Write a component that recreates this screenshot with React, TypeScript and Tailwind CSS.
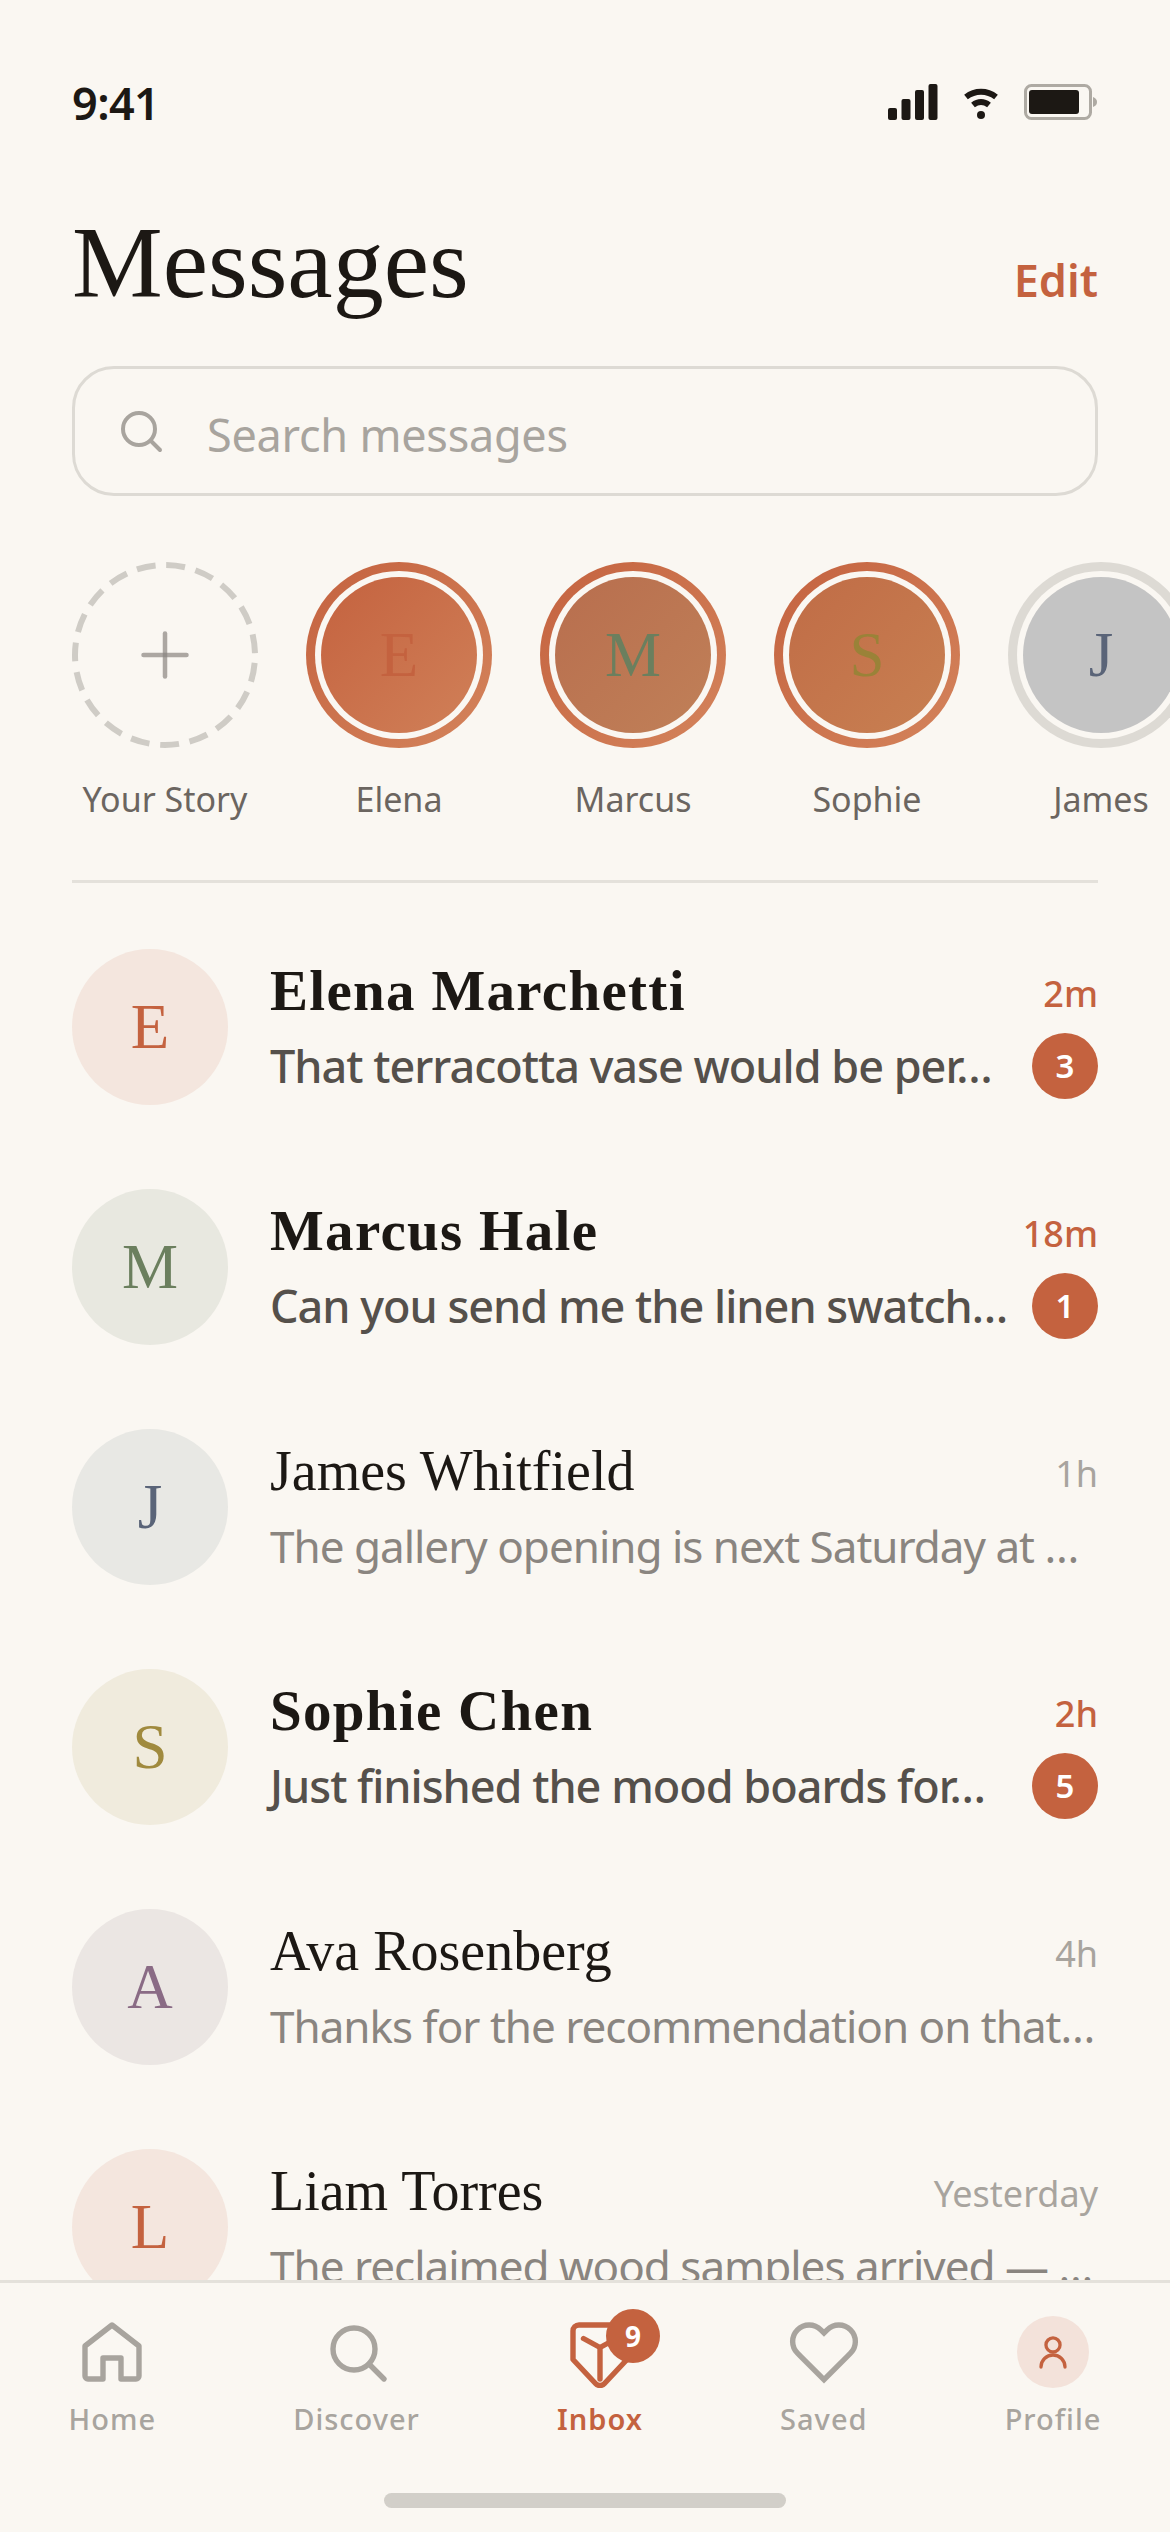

const serif = "font-['Liberation_Serif',serif]";
const rows = [
  { i: 'E', c: 'text-[#C4623F]', b: 'bg-[#F4E6DE]', n: 'Elena Marchetti', m: 'That terracotta vase would be per…', t: '2m', u: 3 },
  { i: 'M', c: 'text-[#6B7F5E]', b: 'bg-[#E8E8E0]', n: 'Marcus Hale', m: 'Can you send me the linen swatch…', t: '18m', u: 1 },
  { i: 'J', c: 'text-[#5A6478]', b: 'bg-[#E8E8E4]', n: 'James Whitfield', m: 'The gallery opening is next Saturday at …', t: '1h', u: 0 },
  { i: 'S', c: 'text-[#A08A3E]', b: 'bg-[#F0EBDD]', n: 'Sophie Chen', m: 'Just finished the mood boards for…', t: '2h', u: 5 },
  { i: 'A', c: 'text-[#8A6B85]', b: 'bg-[#EBE6E3]', n: 'Ava Rosenberg', m: 'Thanks for the recommendation on that…', t: '4h', u: 0 },
  { i: 'L', c: 'text-[#C4623F]', b: 'bg-[#F4E6DE]', n: 'Liam Torres', m: 'The reclaimed wood samples arrived — …', t: 'Yesterday', u: 0 },
];
const stories = [
  { n: 'Elena', i: 'E', c: 'text-[#C4623F]', a: 1, f: 'from-[#C4623F] to-[#D08058]' },
  { n: 'Marcus', i: 'M', c: 'text-[#6B7F5E]', a: 1, f: 'from-[#B86E4E] to-[#C08058]' },
  { n: 'Sophie', i: 'S', c: 'text-[#9A8238]', a: 1, f: 'from-[#C06C46] to-[#C88052]' },
  { n: 'James', i: 'J', c: 'text-[#5A6478]', a: 0, f: 'from-[#C4C4C4] to-[#C4C4C4]' },
];
function Nav({ label, active, children }: { label: string; active?: boolean; children: React.ReactNode }) {
  return (
    <div className="flex flex-col items-center gap-[13px]">
      <div className="relative h-[72px] w-[72px]">{children}</div>
      <span className={`text-[29px] leading-[36px] tracking-[1px] ${active ? 'font-semibold text-[#C4623F]' : 'font-medium text-[#A8A49E]'}`}>{label}</span>
    </div>
  );
}
export default function App() {
  return (
    <div className="relative flex h-[2532px] w-[1170px] flex-col overflow-hidden bg-[#FAF7F2] font-['Noto_Sans',sans-serif]">
      <div className="flex items-end justify-between px-[72px] pt-[78px]">
        <span className="text-[45px] font-semibold leading-[50px] tracking-[-0.6px] text-[#1C1814]">9:41</span>
        <div className="flex items-end gap-[25px] pb-[8px]">
          <svg width="50" height="36" viewBox="0 0 50 36" fill="#1C1814"><rect x="0" y="24" width="9" height="12" rx="2"/><rect x="13.500" y="15" width="9" height="21" rx="2"/><rect x="27" y="6" width="9" height="30" rx="2"/><rect x="40.500" y="0" width="9" height="36" rx="2"/></svg>
          <svg width="36" height="32" viewBox="0 0 36 32" fill="none" stroke="#1C1814" strokeWidth="6"><path d="M3 9c9-7 21-7 30 0"/><path d="M10 17c5-4 11-4 16 0"/><circle cx="18" cy="27" r="4" fill="#1C1814" stroke="none"/></svg>
          <svg width="74" height="36" viewBox="0 0 74 36" fill="none"><rect x="1.500" y="1.500" width="65" height="33" rx="6" stroke="#AEAAA3" strokeWidth="3"/><rect x="5" y="6" width="50" height="24" rx="3" fill="#1C1814"/><path d="M69 13c3 1 4 3 4 5s-1 4-4 5z" fill="#AEAAA3"/></svg>
        </div>
      </div>
      <div className="flex items-end justify-between px-[72px] pt-[75px]">
        <h1 className={`${serif} text-[102px] leading-[120px] text-[#1C1814]`}>Messages</h1>
        <span className="pb-[13px] text-[45px] font-semibold leading-[60px] text-[#C4623F]">Edit</span>
      </div>
      <div className="mx-[72px] mt-[43px] flex h-[130px] items-center gap-[42px] rounded-[42px] border-[3px] border-[#DDDAD4] pl-[42px]">
        <svg width="48" height="48" viewBox="0 0 24 24" fill="none" stroke="#A8A49E" strokeWidth="2" strokeLinecap="round"><circle cx="11" cy="11" r="8"/><path d="M17 17l4.500 4.500"/></svg>
        <span className="pt-[8px] text-[45px] leading-[60px] tracking-[-0.25px] text-[#A8A49E]">Search messages</span>
      </div>
      <div className="mt-[66px] flex gap-[48px] overflow-hidden pl-[72px]">
        <div className="flex w-[186px] shrink-0 flex-col items-center gap-[27px]">
          <div className="flex h-[186px] w-[186px] items-center justify-center">
            <svg width="186" height="186" viewBox="0 0 186 186" fill="none" strokeWidth="6"><circle cx="93" cy="93" r="90" stroke="#CFCCC6" strokeDasharray="19 10.760" strokeDashoffset="-8"/><path d="M93 71.500v43" stroke="#8A8580" strokeOpacity="0.7" strokeWidth="4.500" strokeLinecap="round"/><path d="M71.500 93h43" stroke="#8A8580" strokeOpacity="0.7" strokeWidth="4.500" strokeLinecap="round"/></svg>
          </div>
          <span className="whitespace-nowrap text-[34px] leading-[48px] text-[#6B6560]">Your Story</span>
        </div>
        {stories.map((s) => (
          <div key={s.n} className="flex w-[186px] shrink-0 flex-col items-center gap-[27px]">
            <div className={`h-[186px] w-[186px] shrink-0 rounded-full p-[9px] ${s.a ? 'bg-linear-to-br from-[#C4623F] to-[#D4845C]' : 'bg-[#DDDAD4]'}`}>
              <div className="h-full w-full rounded-full bg-[#FAF7F2] p-[6px]">
                <div className={`flex h-full w-full items-center justify-center rounded-full bg-linear-to-br ${s.f} ${serif} text-[63px] ${s.c}`}>{s.i}</div>
              </div>
            </div>
            <span className="text-[34px] leading-[48px] text-[#6B6560]">{s.n}</span>
          </div>
        ))}
      </div>
      <div className="mx-[72px] mt-[57px] h-[3px] bg-[#E4E1DB]" />
      <div className="relative min-h-0 flex-1 overflow-hidden">
        <div className="flex flex-col gap-[84px] px-[72px] pt-[66px]">
          {rows.map((r) => (
            <div key={r.n} className="flex h-[156px] items-center gap-[42px]">
              <div className={`flex h-[156px] w-[156px] shrink-0 items-center justify-center rounded-full ${r.b} ${r.c} ${serif} text-[63px]`}>{r.i}</div>
              <div className="flex min-w-0 flex-1 flex-col gap-[12px]">
                <div className="flex h-[66px] items-center justify-between">
                  <span className={`${serif} mt-[6px] leading-[60px] text-[#1C1814] ${r.u ? 'text-[57px] font-bold tracking-[1.3px]' : 'text-[56px]'}`}>{r.n}</span>
                  <span className={`mt-[12px] text-[36px] leading-[48px] ${r.u ? 'font-medium text-[#C4623F]' : 'text-[#A8A49E]'}`}>{r.t}</span>
                </div>
                <div className="flex items-center justify-between">
                  <span className={`whitespace-nowrap leading-[66px] ${r.u ? 'text-[45px] font-medium tracking-[-1px] text-[#55504B]' : 'text-[44px] tracking-[-1px] text-[#8A8580]'}`}>{r.m}</span>
                  {r.u > 0 && <span className="flex h-[66px] w-[66px] shrink-0 items-center justify-center rounded-full bg-[#C4623F] text-[33px] font-semibold text-white">{r.u}</span>}
                </div>
              </div>
            </div>
          ))}
        </div>
      </div>
      <div className="h-[252px] shrink-0 border-t-[3px] border-[#E4E1DB] bg-[#FAF7F2] pt-[33px]">
        <div className="flex justify-around">
          <Nav label="Home">
            <svg viewBox="0 0 24 24" fill="none" stroke="#A8A49E" strokeWidth="1.800" strokeLinejoin="round" className="h-full w-full"><path d="M3 10l9-7 9 7v10a1 1 0 0 1-1 1h-5v-7H9v7H4a1 1 0 0 1-1-1z"/></svg>
          </Nav>
          <Nav label="Discover">
            <svg viewBox="0 0 24 24" fill="none" stroke="#A8A49E" strokeWidth="1.800" strokeLinecap="round" className="h-full w-full"><circle cx="11" cy="11" r="7"/><path d="M16 16l5 5"/></svg>
          </Nav>
          <Nav label="Inbox" active>
            <svg viewBox="0 0 24 24" fill="none" stroke="#C4623F" strokeWidth="1.800" strokeLinecap="round" strokeLinejoin="round" className="h-full w-full"><path d="M3 5a2 2 0 0 1 2-2h14a2 2 0 0 1 2 2v9.500l-7.500 8a2 2 0 0 1-3 0L3 14.500z"/><path d="M6.500 7.500l5.500 3 5.500-3M12 10.500V21"/></svg>
            <span className="absolute left-[42px] top-[-7px] flex h-[54px] w-[54px] items-center justify-center rounded-full bg-[#C4623F] text-[28px] font-bold text-white">9</span>
          </Nav>
          <Nav label="Saved">
            <svg viewBox="0 0 24 24" fill="none" stroke="#A8A49E" strokeWidth="1.800" className="h-full w-full"><path d="M20.840 4.610a5.500 5.500 0 0 0-7.780 0L12 5.670l-1.060-1.060a5.500 5.500 0 0 0-7.780 7.780l1.060 1.060L12 21.230l7.780-7.780 1.060-1.060a5.500 5.500 0 0 0 0-7.780z"/></svg>
          </Nav>
          <Nav label="Profile">
            <div className="flex h-full w-full items-center justify-center rounded-full bg-[#F3E2DA]">
              <svg width="36" height="36" viewBox="0 0 24 24" fill="none" stroke="#C4623F" strokeWidth="2.200" strokeLinecap="round"><circle cx="12" cy="7.300" r="4.700"/><path d="M4 22a8 8 0 0 1 16 0"/></svg>
            </div>
          </Nav>
        </div>
      </div>
      <div className="absolute bottom-[24px] left-[384px] h-[15px] w-[402px] rounded-full bg-[#D2CFC9]" />
    </div>
  );
}
